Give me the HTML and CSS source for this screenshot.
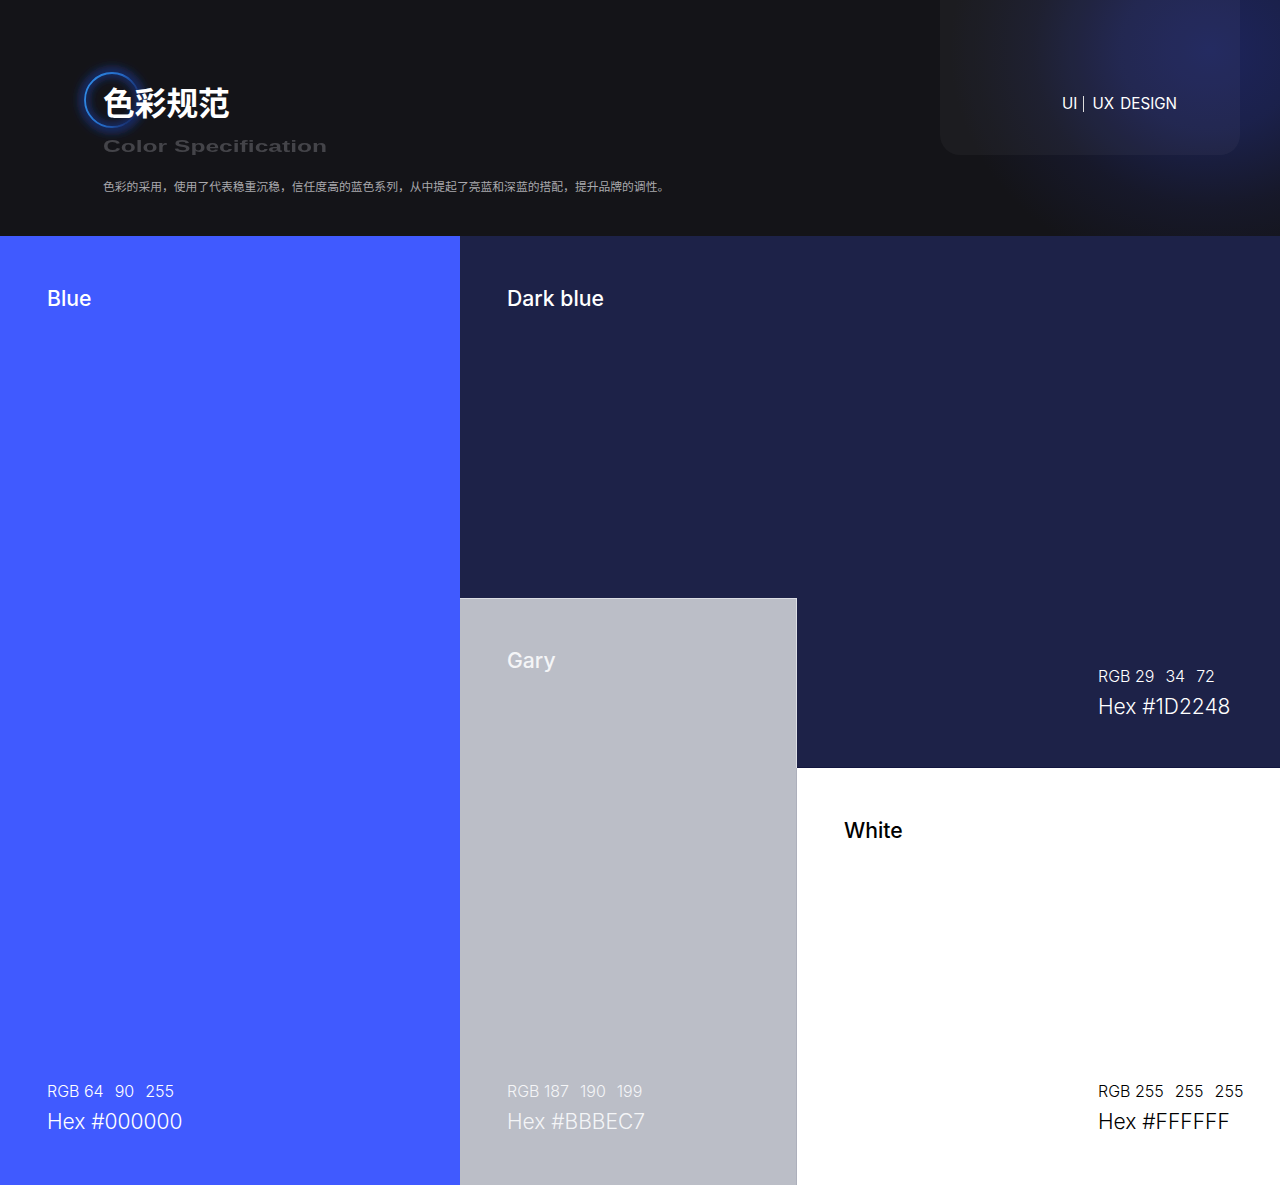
FILE: index.html
```html
<!DOCTYPE html>
<html lang="en">
<head>
    <meta charset="UTF-8">
    <meta name="viewport" content="width=device-width, initial-scale=1.0">
    <title>Color Specification</title>
    <link rel="stylesheet" href="styles.css">
</head>
<body>
    <header class="header">
        <div class="header-glow"></div>
        <div class="header-card">
            <span class="design-tag">UI<i class="tag-bar"></i>UX DESIGN</span>
        </div>
        <svg class="ring" width="90" height="90" viewBox="0 0 90 90" fill="none">
            <defs>
                <linearGradient id="ringGrad" x1="0" y1="0.25" x2="1" y2="0.6">
                    <stop offset="0" stop-color="#2f8be6"/>
                    <stop offset="0.55" stop-color="#2468c4"/>
                    <stop offset="1" stop-color="#1c3f99" stop-opacity="0.25"/>
                </linearGradient>
                <filter id="ringBlur" x="-40%" y="-40%" width="180%" height="180%">
                    <feGaussianBlur stdDeviation="5"/>
                </filter>
                <filter id="ringSoft" x="-20%" y="-20%" width="140%" height="140%">
                    <feGaussianBlur stdDeviation="0.7"/>
                </filter>
            </defs>
            <circle cx="45" cy="45" r="28" stroke="#1d3fa8" stroke-opacity="0.7" stroke-width="8" filter="url(#ringBlur)"/>
            <circle cx="45" cy="45" r="27" stroke="url(#ringGrad)" stroke-width="1.8" filter="url(#ringSoft)"/>
        </svg>
        <h1 class="title">色彩规范</h1>
        <p class="subtitle">Color Specification</p>
        <p class="intro">色彩的采用，使用了代表稳重沉稳，信任度高的蓝色系列，从中提起了亮蓝和深蓝的搭配，提升品牌的调性。</p>
    </header>

    <main class="palette">
        <section class="swatch blue">
            <h2 class="swatch-name">Blue</h2>
            <div class="values">
                <p class="rgb"><span>RGB 64</span><span>90</span><span>255</span></p>
                <p class="hex">Hex #000000</p>
            </div>
        </section>

        <div class="dark-area">
            <h2 class="swatch-name dark-name">Dark blue</h2>
            <div class="lower">
                <section class="swatch gray">
                    <h2 class="swatch-name">Gary</h2>
                    <div class="values">
                        <p class="rgb"><span>RGB 187</span><span>190</span><span>199</span></p>
                        <p class="hex">Hex #BBBEC7</p>
                    </div>
                </section>
                <div class="side">
                    <div class="values dark-values">
                        <p class="rgb"><span>RGB 29</span><span>34</span><span>72</span></p>
                        <p class="hex">Hex #1D2248</p>
                    </div>
                    <section class="swatch white">
                        <h2 class="swatch-name">White</h2>
                        <div class="values right-values">
                            <p class="rgb"><span>RGB 255</span><span>255</span><span>255</span></p>
                            <p class="hex">Hex #FFFFFF</p>
                        </div>
                    </section>
                </div>
            </div>
        </div>
    </main>
</body>
</html>
```

FILE: styles.css
```css
* {
    box-sizing: border-box;
}
body {
    margin: 0;
    width: 1280px;
    height: 1185px;
    overflow: hidden;
    background-color: #1d2248;
    color: #fff;
    font-family: 'Inter', 'Noto Sans CJK SC', sans-serif;
}
p, h1, h2 {
    margin: 0;
}

/* header */
.header {
    position: relative;
    height: 236px;
    padding: 82px 0 0 103px;
    background-color: #141418;
    overflow: hidden;
}
.header-glow {
    position: absolute;
    left: 950px;
    top: -180px;
    width: 520px;
    height: 460px;
    background: radial-gradient(closest-side, rgba(29,36,92,1) 0%, rgba(28,35,84,0.85) 35%, rgba(26,30,66,0.42) 68%, rgba(20,20,24,0) 100%);
}
.header-card {
    position: absolute;
    left: 940px;
    top: -40px;
    width: 300px;
    height: 195px;
    border-radius: 20px;
    background-color: rgba(255,255,255,0.035);
    display: flex;
    align-items: flex-end;
    padding: 0 0 42px 122px;
}
.design-tag {
    display: flex;
    align-items: center;
    font-size: 15.2px;
    font-weight: 400;
    line-height: 18px;
    word-spacing: 2px;
    white-space: nowrap;
}
.tag-bar {
    width: 1px;
    height: 16px;
    margin: 0 8px 0 6px;
    background-color: #ddd;
}
.ring {
    position: absolute;
    left: 67px;
    top: 55px;
}
.title {
    position: relative;
    font-family: 'Noto Sans CJK SC', sans-serif;
    font-size: 31.7px;
    line-height: 38px;
    font-weight: 700;
    white-space: nowrap;
}
.subtitle {
    margin-top: 17px;
    font-family: 'Liberation Sans', sans-serif;
    font-size: 16.5px;
    line-height: 18px;
    font-weight: 700;
    color: #444449;
    white-space: nowrap;
    transform: scaleX(1.49);
    transform-origin: left center;
}
.intro {
    margin-top: 23px;
    font-family: 'Noto Sans CJK SC', sans-serif;
    font-size: 11.8px;
    line-height: 16px;
    color: #a9a9ad;
    white-space: nowrap;
}

/* palette */
.palette {
    display: flex;
    height: 949px;
}
.swatch {
    position: relative;
    display: flex;
    flex-direction: column;
    justify-content: space-between;
}
.swatch-name {
    font-size: 21.2px;
    line-height: 26px;
    font-weight: 500;
}
.blue {
    width: 460px;
    padding: 49px 0 50px 47px;
    background-color: #405aff;
}
.dark-area {
    flex: 1;
    display: flex;
    flex-direction: column;
    background-color: #1d2248;
}
.dark-name {
    height: 362px;
    padding: 49px 0 0 47px;
}
.lower {
    flex: 1;
    display: flex;
}
.gray {
    width: 337px;
    padding: 48px 0 50px 47px;
    background-color: #bbbec7;
    border-top: 1px solid #dcdee4;
    border-right: 1px solid #adb0bc;
    color: #f4f5f7;
}
/* lighter edge where the gray meets the dark blue */
.gray::after {
    content: "";
    position: absolute;
    top: -1px;
    right: -1px;
    width: 1px;
    height: 170px;
    background-color: #dcdee4;
}
.side {
    flex: 1;
    display: flex;
    flex-direction: column;
}
.dark-values {
    height: 170px;
    padding: 68px 0 0 301px;
    border-bottom: 1px solid #12163f;
}
.white {
    flex: 1;
    padding: 49px 0 50px 47px;
    background-color: #fff;
    color: #000;
}
.right-values {
    padding-left: 254px;
}
.rgb {
    display: flex;
    gap: 11px;
    font-size: 16px;
    font-weight: 350;
    line-height: 20px;
    white-space: nowrap;
}
.hex {
    margin-top: 8px;
    font-size: 21px;
    font-weight: 350;
    line-height: 26px;
    white-space: nowrap;
}
```
